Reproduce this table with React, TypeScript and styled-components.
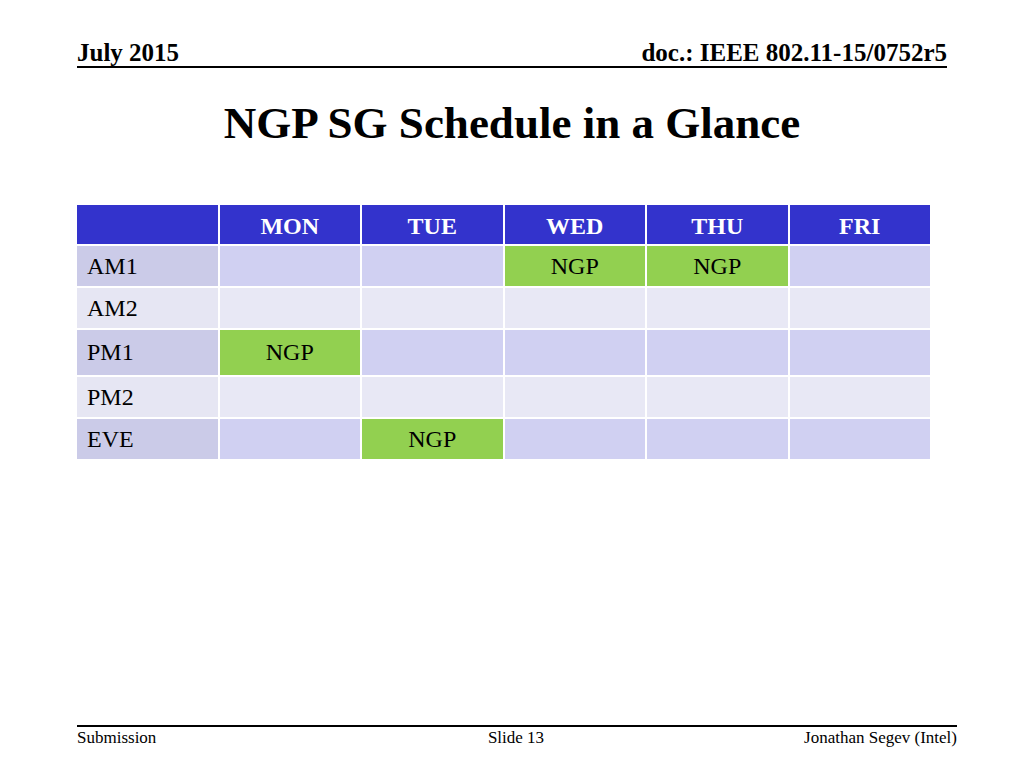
import React from "react";
import styled, { createGlobalStyle } from "styled-components";

const GlobalStyle = createGlobalStyle`
  html, body { margin: 0; padding: 0; background: #ffffff; }
  body { font-family: "Liberation Serif", "Times New Roman", serif; color: #000; }
`;

const Slide = styled.div`
  width: 1024px;
  height: 768px;
  display: flex;
  flex-direction: column;
  background: #fff;
  overflow: hidden;
`;

const Header = styled.header`
  margin: 40px 77px 0 77px;
  display: flex;
  justify-content: space-between;
  align-items: flex-end;
  border-bottom: 2px solid #000;
  font-weight: bold;
  font-size: 25px;
  line-height: 26px;
`;

const Title = styled.h1`
  margin: 29px 0 0 0;
  text-align: center;
  font-size: 45px;
  line-height: 52px;
  font-weight: bold;
`;

const Table = styled.div`
  margin: 56px 0 0 77px;
  width: 853px;
  display: grid;
  grid-template-columns: repeat(6, 1fr);
  grid-template-rows: 39px 40px 40px 45px 40px 40px;
  column-gap: 2px;
  row-gap: 2px;
`;

type CellKind = "head" | "odd" | "even" | "oddFirst" | "evenFirst" | "green";

const colors: Record<CellKind, string> = {
  head: "#3333cc",
  odd: "#d0d0f2",
  even: "#e8e8f5",
  oddFirst: "#cbcbe8",
  evenFirst: "#e6e6f3",
  green: "#92d050",
};

const Cell = styled.div<{ $kind: CellKind; $label?: boolean }>`
  background: ${(p) => colors[p.$kind]};
  color: ${(p) => (p.$kind === "head" ? "#ffffff" : "#000")};
  font-weight: ${(p) => (p.$kind === "head" ? "bold" : "normal")};
  font-size: 24px;
  display: flex;
  align-items: center;
  justify-content: ${(p) => (p.$label ? "flex-start" : "center")};
  padding-left: ${(p) => (p.$label ? "10px" : "0")};
  padding-top: ${(p) => (p.$kind === "head" ? "3px" : "0")};
  box-sizing: border-box;
`;

const Spacer = styled.div`
  flex: 1;
`;

const Footer = styled.footer`
  margin: 0 67px 20px 77px;
  border-top: 2px solid #000;
  display: grid;
  grid-template-columns: 1fr auto 1fr;
  font-size: 17px;
  line-height: 20px;
  padding-top: 1px;
`;

const FooterLeft = styled.span``;
const FooterCenter = styled.span`
  position: relative;
  left: -1px;
`;
const FooterRight = styled.span`
  text-align: right;
`;

const days = ["MON", "TUE", "WED", "THU", "FRI"];
const rows: { label: string; ngp: number[] }[] = [
  { label: "AM1", ngp: [2, 3] },
  { label: "AM2", ngp: [] },
  { label: "PM1", ngp: [0] },
  { label: "PM2", ngp: [] },
  { label: "EVE", ngp: [1] },
];

export default function App() {
  return (
    <>
      <GlobalStyle />
      <Slide>
        <Header>
          <span>July 2015</span>
          <span>doc.: IEEE 802.11-15/0752r5</span>
        </Header>
        <Title>NGP SG Schedule in a Glance</Title>
        <Table>
          <Cell $kind="head" />
          {days.map((d) => (
            <Cell key={d} $kind="head">
              {d}
            </Cell>
          ))}
          {rows.map((r, i) => {
            const odd = i % 2 === 0;
            return (
              <React.Fragment key={r.label}>
                <Cell $kind={odd ? "oddFirst" : "evenFirst"} $label>
                  {r.label}
                </Cell>
                {days.map((d, j) =>
                  r.ngp.includes(j) ? (
                    <Cell key={d} $kind="green">
                      NGP
                    </Cell>
                  ) : (
                    <Cell key={d} $kind={odd ? "odd" : "even"} />
                  )
                )}
              </React.Fragment>
            );
          })}
        </Table>
        <Spacer />
        <Footer>
          <FooterLeft>Submission</FooterLeft>
          <FooterCenter>Slide 13</FooterCenter>
          <FooterRight>Jonathan Segev (Intel)</FooterRight>
        </Footer>
      </Slide>
    </>
  );
}
